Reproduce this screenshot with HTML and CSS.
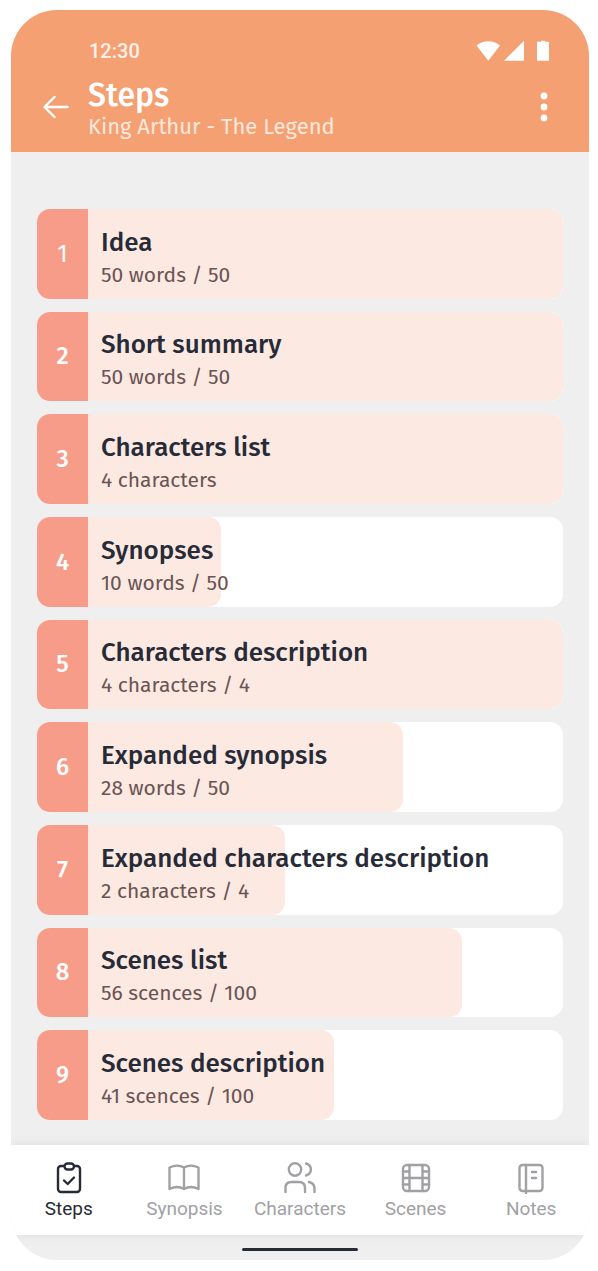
FILE: index.html
```
<!DOCTYPE html>
<html lang="en">
<head>
  <meta charset="UTF-8" />
  <meta name="viewport" content="width=device-width, initial-scale=1.0" />
  <title>Steps</title>
  <link rel="stylesheet" href="styles.css">
</head>
<body>

<div class="phone">
  <header class="header">
    <div class="status-bar">
      <span class="clock">12:30</span>
      <svg class="status-icons" width="74" height="22" viewBox="0 0 74 22" fill="#fff" aria-hidden="true">
        <path d="M0.5 5.5C7 -0.3 17.5 -0.3 24 5.5L12.3 20.8z"/>
        <path d="M28 20.8L48 0.8V20.8z"/>
        <path d="M61 1.8H65V0.8H69V1.8H73V20.8H61z"/>
      </svg>
    </div>

    <div class="title-bar">
      <button class="icon-btn" aria-label="Back">
        <svg width="26" height="24" viewBox="0 0 26 24" fill="none" stroke="#fff" stroke-width="2.4" stroke-linecap="round" stroke-linejoin="round">
          <path d="M24.5 12H1.5M11.500 2L1.5 12L11.5 22"/>
        </svg>
      </button>
      <div class="titles">
        <h1>Steps</h1>
        <p>King Arthur - The Legend</p>
      </div>
      <button class="icon-btn" aria-label="More">
        <svg width="8" height="30" viewBox="0 0 8 30" fill="#fff">
          <circle cx="4" cy="4" r="3.4"/>
          <circle cx="4" cy="15" r="3.4"/>
          <circle cx="4" cy="26" r="3.4"/>
        </svg>
      </button>
    </div>
  </header>

  <main class="content">
    <ol class="steps">
      <li><a class="step" href="#step1">
        <span class="num light">1</span>
        <span class="body"><span class="fill" style="width: 100%"></span><span class="text"><b>Idea</b><small>50 words / 50</small></span></span>
      </a></li>
      <li><a class="step" href="#step2">
        <span class="num">2</span>
        <span class="body"><span class="fill" style="width: 100%"></span><span class="text"><b>Short summary</b><small>50 words / 50</small></span></span>
      </a></li>
      <li><a class="step" href="#step3">
        <span class="num">3</span>
        <span class="body"><span class="fill" style="width: 100%"></span><span class="text"><b>Characters list</b><small>4 characters</small></span></span>
      </a></li>
      <li><a class="step" href="#step4">
        <span class="num">4</span>
        <span class="body"><span class="fill" style="width: 28%"></span><span class="text"><b>Synopses</b><small>10 words / 50</small></span></span>
      </a></li>
      <li><a class="step" href="#step5">
        <span class="num">5</span>
        <span class="body"><span class="fill" style="width: 100%"></span><span class="text"><b>Characters description</b><small>4 characters / 4</small></span></span>
      </a></li>
      <li><a class="step" href="#step6">
        <span class="num">6</span>
        <span class="body"><span class="fill" style="width: 66.3%"></span><span class="text"><b>Expanded synopsis</b><small>28 words / 50</small></span></span>
      </a></li>
      <li><a class="step" href="#step7">
        <span class="num">7</span>
        <span class="body"><span class="fill" style="width: 41.5%"></span><span class="text"><b>Expanded characters description</b><small>2 characters / 4</small></span></span>
      </a></li>
      <li><a class="step" href="#step8">
        <span class="num">8</span>
        <span class="body"><span class="fill" style="width: 78.7%"></span><span class="text"><b>Scenes list</b><small>56 scences / 100</small></span></span>
      </a></li>
      <li><a class="step" href="#step9">
        <span class="num">9</span>
        <span class="body"><span class="fill" style="width: 51.8%"></span><span class="text"><b>Scenes description</b><small>41 scences / 100</small></span></span>
      </a></li>
    </ol>
  </main>

  <nav class="tabs">
    <a class="tab active" href="#steps">
      <svg viewBox="0 0 32 32"><rect x="5" y="4" width="22" height="26" rx="3"/><rect class="cover" x="11.5" y="1.5" width="9.5" height="6" rx="3"/><path d="M11 18.5L14.7 22L21 15.5"/></svg>
      <span>Steps</span>
    </a>
    <a class="tab" href="#synopsis">
      <svg viewBox="0 0 32 32"><path d="M16 5.5C12 3.3 6 3.3 1.5 5.5V27C6 24.7 12 24.7 16 27C20 24.7 26 24.7 30.5 27V5.5C26 3.3 20 3.3 16 5.5zM16 5.5V27"/></svg>
      <span>Synopsis</span>
    </a>
    <a class="tab" href="#characters">
      <svg viewBox="0 0 32 32"><circle cx="11" cy="7.5" r="6.2"/><path d="M1.5 30V26Q1.5 20 7.5 20H15Q21 20 21 26V30M22 1.5C28.5 3.5 28.5 11.5 22 13.5M25 20Q30.5 21.5 30.5 26V30"/></svg>
      <span>Characters</span>
    </a>
    <a class="tab" href="#scenes">
      <svg viewBox="0 0 32 32"><rect x="3" y="3" width="26" height="26" rx="4"/><path d="M9.5 3V29M22.5 3V29M3 16H29M3 9.5H9.5M3 22.5H9.5M22.5 9.5H29M22.5 22.5H29"/></svg>
      <span>Scenes</span>
    </a>
    <a class="tab" href="#notes">
      <svg viewBox="0 0 32 32"><rect x="4.5" y="3" width="23" height="26" rx="3"/><path d="M11 3V31M17 10H21M17 16H21"/></svg>
      <span>Notes</span>
    </a>
  </nav>

  <div class="home-bar"><span></span></div>
</div>

</body>
</html>
```
FILE: styles.css
```
* { box-sizing: border-box; }
body {
  margin: 0;
  padding: 10px 9px 11px 11px;
  background-color: #fff;
  font-family: "Fira Sans", "Noto Sans", sans-serif;
}
.phone {
  display: flex;
  flex-direction: column;
  min-height: calc(100vh - 21px);
  border-radius: 46px;
  overflow: hidden;
  background-color: #efefef;
}
.header {
  height: 142px;
  padding: 30px 39px 0 32px;
  background-color: #f4a072;
  color: #fff;
}
.status-bar {
  display: flex;
  justify-content: space-between;
  align-items: center;
  height: 22px;
  padding-left: 46px;
  font-family: Roboto, sans-serif;
  font-size: 20px;
  font-weight: 500;
}
.clock { opacity: 0.85; }
.title-bar {
  display: flex;
  align-items: center;
  height: 90px;
  padding-right: 2px;
}
.icon-btn {
  display: flex;
  padding: 0;
  border: none;
  background: none;
  cursor: pointer;
}
.titles {
  flex: 1;
  padding: 4px 0 0 19px;
}
.titles h1 {
  margin: 0;
  font-size: 32px;
  font-weight: 500;
  line-height: 36px;
}
.titles p {
  margin: 0;
  font-size: 22px;
  line-height: 28px;
  opacity: 0.75;
}
.content {
  flex: 1;
  display: flex;
  padding: 57px 26px 25px;
}
.steps {
  flex: 1;
  display: grid;
  grid-auto-rows: 1fr;
  gap: 13px;
  margin: 0;
  padding: 0;
  list-style: none;
}
.step {
  display: flex;
  height: 100%;
  border-radius: 13px;
  overflow: hidden;
  background-color: #fff;
  text-decoration: none;
}
.num {
  display: flex;
  align-items: center;
  justify-content: center;
  width: 51px;
  background-color: #f79c88;
  color: #fff;
  font-size: 24px;
  font-weight: 500;
}
.num.light { font-weight: 400; }
/* fill and text share one grid cell */
.body {
  flex: 1;
  display: grid;
}
.fill, .text { grid-area: 1 / 1; }
.fill {
  background-color: #fce9e2;
  border-radius: 0 13px 13px 0;
}
.text {
  display: flex;
  flex-direction: column;
  justify-content: center;
  padding: 8px 0 0 13px;
}
.text b {
  color: #272b37;
  font-size: 26px;
  font-weight: 500;
  line-height: 34px;
}
.text small {
  color: #6b5454;
  font-size: 21px;
  line-height: 30px;
}
.tabs {
  display: grid;
  grid-template-columns: repeat(5, 1fr);
  height: 90px;
  background-color: #fff;
  box-shadow: 0 0 10px rgba(0,0,0,0.08);
}
.tab {
  display: flex;
  flex-direction: column;
  align-items: center;
  padding-top: 17px;
  color: #a1a1a5;
  font-family: Roboto, sans-serif;
  font-size: 19px;
  line-height: 30px;
  text-decoration: none;
}
.tab svg {
  width: 32px;
  height: 32px;
  fill: none;
  stroke: currentColor;
  stroke-width: 2.4;
  stroke-linecap: round;
  stroke-linejoin: round;
}
.tab .cover { fill: #fff; }
.tab.active { color: #272b37; }
.home-bar {
  display: flex;
  justify-content: center;
  height: 25px;
  padding-top: 13px;
}
.home-bar span {
  width: 116px;
  height: 3px;
  border-radius: 2px;
  background-color: #272b37;
}
```
